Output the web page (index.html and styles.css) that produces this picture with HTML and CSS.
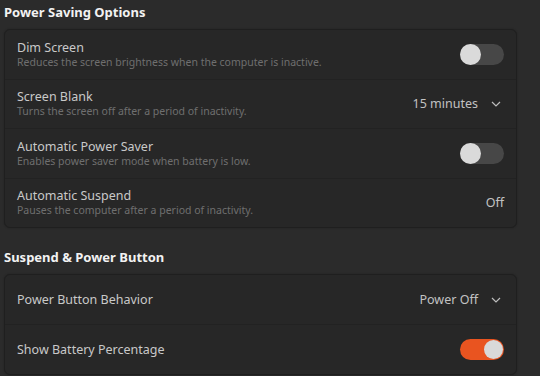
FILE: index.html
```html
<!DOCTYPE html>
<html>
<head>
<meta charset="utf-8">
<link rel="stylesheet" href="styles.css">
</head>
<body>
<div class="page">
  <h2 class="section-title">Power Saving Options</h2>
  <div class="card">
    <div class="row">
      <div class="text">
        <div class="title">Dim Screen</div>
        <div class="subtitle">Reduces the screen brightness when the computer is inactive.</div>
      </div>
      <div class="switch"><span class="knob"></span></div>
    </div>
    <div class="row">
      <div class="text">
        <div class="title">Screen Blank</div>
        <div class="subtitle">Turns the screen off after a period of inactivity.</div>
      </div>
      <div class="value">15 minutes
        <svg class="chev" width="10" height="6" viewBox="0 0 10 6"><path d="M1 1 L5 5 L9 1" fill="none" stroke="#bdbdbd" stroke-width="1.2"/></svg>
      </div>
    </div>
    <div class="row">
      <div class="text">
        <div class="title">Automatic Power Saver</div>
        <div class="subtitle">Enables power saver mode when battery is low.</div>
      </div>
      <div class="switch"><span class="knob"></span></div>
    </div>
    <div class="row">
      <div class="text">
        <div class="title">Automatic Suspend</div>
        <div class="subtitle">Pauses the computer after a period of inactivity.</div>
      </div>
      <div class="value plain">Off</div>
    </div>
  </div>

  <h2 class="section-title second">Suspend &amp; Power Button</h2>
  <div class="card second-card">
    <div class="row">
      <div class="text">
        <div class="title">Power Button Behavior</div>
      </div>
      <div class="value">Power Off
        <svg class="chev" width="10" height="6" viewBox="0 0 10 6"><path d="M1 1 L5 5 L9 1" fill="none" stroke="#bdbdbd" stroke-width="1.2"/></svg>
      </div>
    </div>
    <div class="row">
      <div class="text">
        <div class="title">Show Battery Percentage</div>
      </div>
      <div class="switch on"><span class="knob"></span></div>
    </div>
  </div>
</div>
</body>
</html>
```

FILE: styles.css
```css
html, body {
  margin: 0;
  padding: 0;
  background: #2b2b2b;
  height: 100%;
  overflow: hidden;
}
body {
  font-family: "Noto Sans", "DejaVu Sans", sans-serif;
  color: #cfcfcf;
}
.page {
  padding: 3px 23px 0 4px;
}
.section-title {
  margin: 0;
  height: 19px;
  line-height: 19px;
  font-size: 13px;
  font-weight: 700;
  color: #f2f2f2;
  margin-bottom: 7px;
}
.section-title.second {
  margin-top: 19px;
  height: 20px;
  line-height: 20px;
  margin-bottom: 7px;
}
.card {
  background: #272727;
  border: 1px solid #1f1f1f;
  border-radius: 6px;
  display: flex;
  flex-direction: column;
  box-shadow: 0 0 2px rgba(0,0,0,0.25);
}
.row {
  height: 48.5px;
  display: flex;
  align-items: center;
  justify-content: space-between;
  padding: 0 12px 0 12px;
  border-top: 1px solid #222222;
}
.second-card .row {
  height: 49px;
}
.row:first-child {
  border-top: none;
}
.text {
  display: flex;
  flex-direction: column;
}
.title {
  font-size: 12.5px;
  line-height: 16px;
  color: #c9c9c9;
}
.subtitle {
  font-size: 10.5px;
  line-height: 13px;
  color: #6f6f6f;
}
.value {
  display: flex;
  align-items: center;
  font-size: 12.5px;
  color: #c2c2c2;
}
.value .chev {
  margin-left: 13px;
  margin-right: 3px;
}
.value.plain {
  margin-right: 0;
}
.switch {
  width: 44px;
  height: 21px;
  border-radius: 11px;
  background: #474747;
  position: relative;
  flex: none;
}
.switch .knob {
  position: absolute;
  top: 0;
  left: 0;
  width: 21px;
  height: 21px;
  border-radius: 50%;
  background: #dadada;
}
.switch.on {
  background: #e95420;
}
.switch.on .knob {
  left: auto;
  right: 1px;
  top: 1px;
  width: 19px;
  height: 19px;
  background: #d9d9d9;
}
```
